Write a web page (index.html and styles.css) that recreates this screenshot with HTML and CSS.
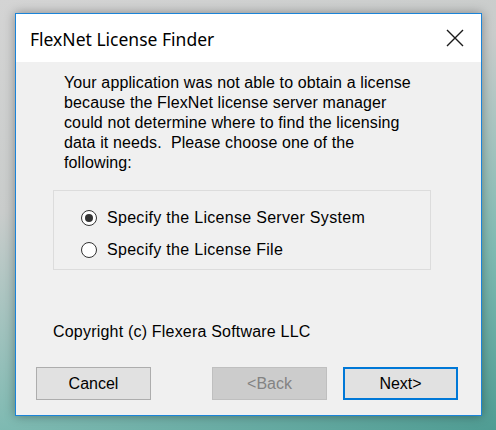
FILE: index.html
```html
<!DOCTYPE html>
<html>
<head>
<meta charset="utf-8">
<link rel="stylesheet" href="styles.css">
</head>
<body>
<div class="desktop">
  <div class="window">
    <div class="titlebar">
      <span class="title">FlexNet License Finder</span>
      <span class="close">
        <svg width="18" height="18" viewBox="0 0 18 18"><path d="M1 1 L17 17 M17 1 L1 17" stroke="#1a1a1a" stroke-width="1.4" fill="none"/></svg>
      </span>
    </div>
    <div class="content">
      <p class="message">Your application was not able to obtain a license<br>because the FlexNet license server manager<br>could not determine where to find the licensing<br>data it needs.&nbsp; Please choose one of the<br>following:</p>
      <div class="group">
        <div class="option"><span class="radio checked"></span><span>Specify the License Server System</span></div>
        <div class="option"><span class="radio"></span><span>Specify the License File</span></div>
      </div>
      <div class="copyright">Copyright (c) Flexera Software LLC</div>
      <div class="buttons">
        <div class="btn">Cancel</div>
        <div class="btn disabled">&lt;Back</div>
        <div class="btn default">Next&gt;</div>
      </div>
    </div>
  </div>
</div>
</body>
</html>
```
FILE: styles.css
```css
html, body {
  margin: 0;
  padding: 0;
}
body {
  width: 496px;
  height: 430px;
  overflow: hidden;
  font-family: "Liberation Sans", Arial, sans-serif;
}
.desktop {
  width: 496px;
  height: 430px;
  padding: 13px 0 0 15px;
  box-sizing: border-box;
  background: linear-gradient(160deg, #d4d4d4 0%, #c9cccb 35%, #7fbab2 70%, #4f9c93 100%);
}
.window {
  width: 467px;
  height: 403px;
  box-sizing: border-box;
  border: 1px solid #1b84d8;
  background: #f0f0f0;
  display: flex;
  flex-direction: column;
  box-shadow: 0 0 10px rgba(0,0,0,0.35);
}
.titlebar {
  height: 48px;
  background: #ffffff;
  display: flex;
  align-items: center;
  justify-content: space-between;
  padding: 0 17px 0 14px;
  flex: none;
}
.title {
  font-family: "Noto Sans", "Open Sans", sans-serif;
  font-size: 17.5px;
  color: #000;
  margin-top: 1px;
}
.close {
  display: flex;
  width: 18px;
  height: 18px;
}
.content {
  flex: 1;
  display: flex;
  flex-direction: column;
  padding: 11px 0 0 0;
}
.message {
  margin: 0 0 0 48px;
  white-space: nowrap;
  font-size: 16px;
  line-height: 20px;
  letter-spacing: 0.12px;
  color: #000;
}
.group {
  margin: 17px 0 0 37px;
  width: 378px;
  height: 80px;
  box-sizing: border-box;
  border: 1px solid #dcdcdc;
  display: flex;
  flex-direction: column;
  padding: 18px 0 0 27px;
  gap: 14px;
}
.option {
  display: flex;
  align-items: center;
  gap: 10px;
  height: 18px;
  font-size: 16px;
  letter-spacing: 0.3px;
  color: #000;
}
.radio {
  width: 16px;
  height: 16px;
  box-sizing: border-box;
  border: 1px solid #333;
  border-radius: 50%;
  background: #fff;
  display: flex;
  align-items: center;
  justify-content: center;
}
.radio.checked::after {
  content: "";
  width: 8px;
  height: 8px;
  border-radius: 50%;
  background: #333;
}
.copyright {
  margin: 53px 0 0 37px;
  font-size: 16px;
  letter-spacing: 0.2px;
  color: #000;
}
.buttons {
  margin: 26px 0 0 20px;
  display: flex;
  gap: 61px;
}
.btn {
  width: 115px;
  height: 33px;
  box-sizing: border-box;
  border: 1px solid #adadad;
  background: #e1e1e1;
  display: flex;
  align-items: center;
  justify-content: center;
  font-size: 16px;
  color: #000;
}
.btn.disabled {
  background: #cccccc;
  border-color: #bfbfbf;
  color: #838383;
  margin-right: -45px;
}
.btn.default {
  border: 2px solid #0078d7;
}
```
